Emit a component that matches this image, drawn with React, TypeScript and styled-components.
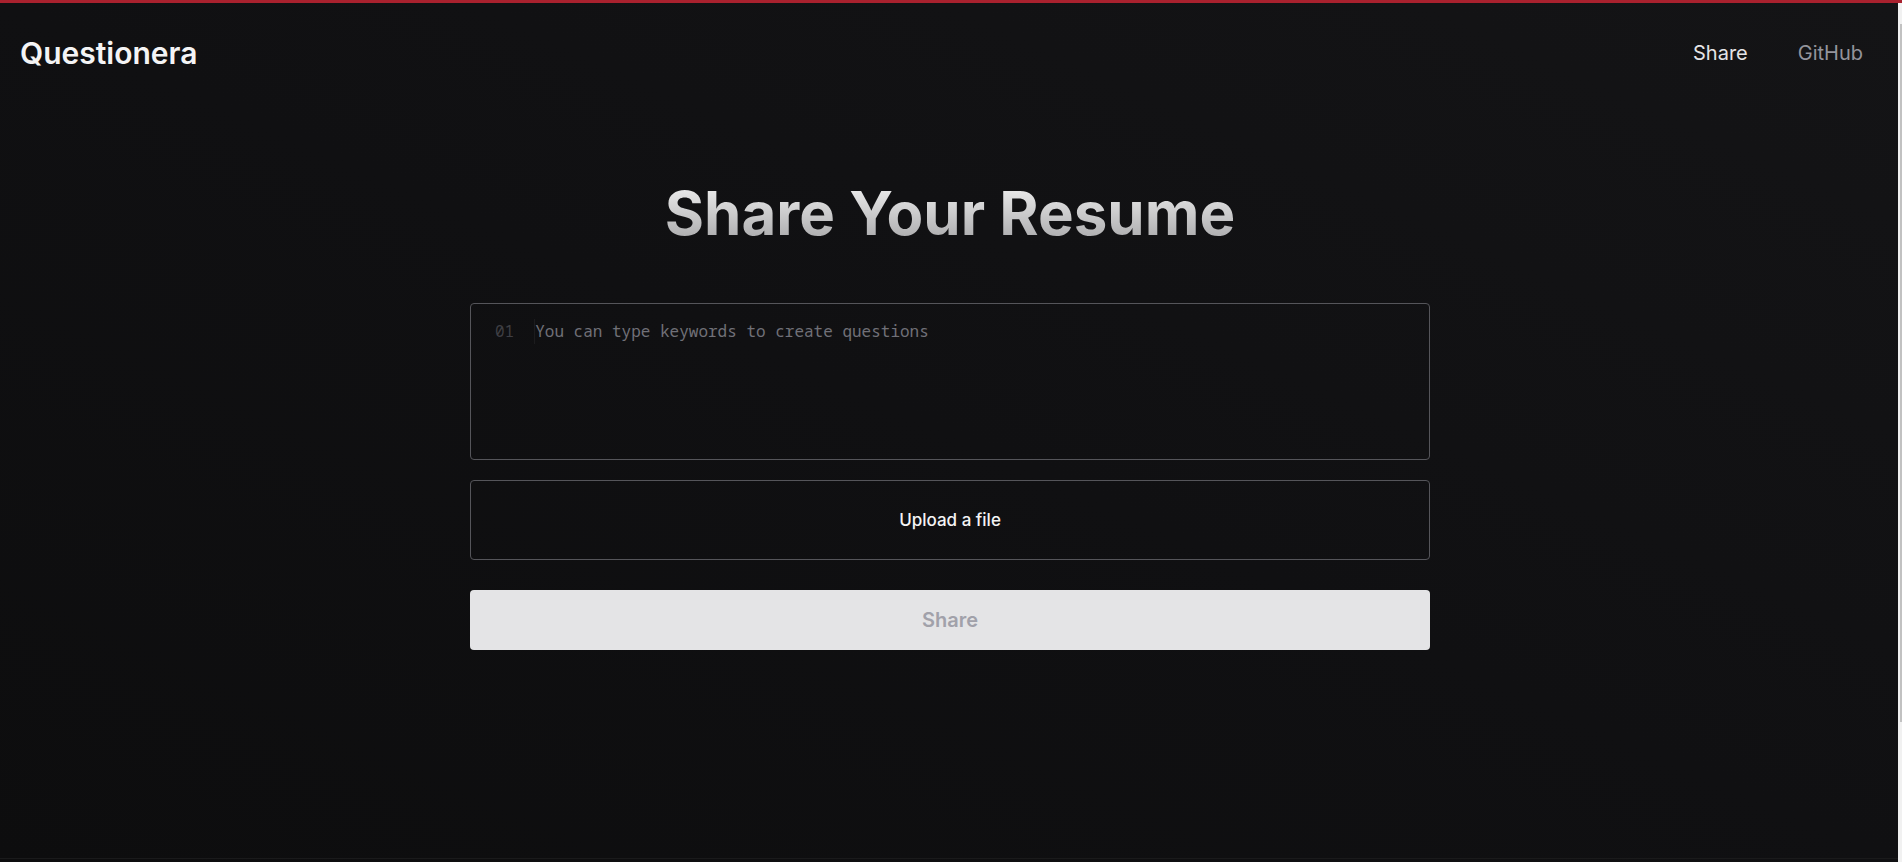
import React from "react";
import styled, { createGlobalStyle } from "styled-components";

const GlobalStyle = createGlobalStyle`
  *, *::before, *::after { box-sizing: border-box; }
  body {
    margin: 0;
    background: #0f0f10;
    color: #f4f4f5;
    font-family: Inter, "Liberation Sans", sans-serif;
  }
`;

const Shell = styled.div`
  display: flex;
  min-height: 100vh;
  flex-direction: column;
  border-top: 3px solid #a9212e;
`;

const Viewport = styled.div`
  display: flex;
  flex: 1;
`;

const Page = styled.div`
  display: flex;
  flex: 1;
  flex-direction: column;
  min-width: 0;
  background: linear-gradient(to top right, #0d0d0e, #101012 50%, #141416);
`;

const Header = styled.header`
  display: flex;
  align-items: center;
  justify-content: space-between;
  padding: 32px 37px 32px 20px;
`;

const Logo = styled.a`
  color: #f4f4f5;
  font-size: 30px;
  font-weight: 600;
  line-height: 36px;
  text-decoration: none;
`;

const Nav = styled.nav`
  display: flex;
  gap: 50px;
`;

const NavLink = styled.a<{ $active?: boolean }>`
  color: ${(p) => (p.$active ? "#e4e4e7" : "#94949c")};
  font-size: 20px;
  line-height: 28px;
  text-decoration: none;
`;

const Main = styled.main`
  display: flex;
  flex: 1;
  flex-direction: column;
  align-items: center;
  padding: 80px 20px;
`;

const Title = styled.h1`
  margin: 0 0 60px;
  background: linear-gradient(to bottom, #f0f0f0, #a8a8aa);
  background-clip: text;
  -webkit-background-clip: text;
  color: transparent;
  font-size: 60px;
  font-weight: 700;
  line-height: 60px;
  text-align: center;
`;

const Form = styled.form`
  display: flex;
  flex-direction: column;
  width: 100%;
  max-width: 960px;
`;

const Editor = styled.div`
  display: flex;
  align-items: flex-start;
  height: 157px;
  padding: 15px 24px;
  border: 1px solid #55555a;
  border-radius: 4px;
  font-family: "Noto Sans Mono", "DejaVu Sans Mono", monospace;
  font-size: 16px;
  line-height: 25px;
`;

const LineNumber = styled.span`
  padding-right: 20px;
  border-right: 1px solid #1c1c1e;
  color: #3f3f44;
`;

const KeywordInput = styled.textarea`
  flex: 1;
  align-self: stretch;
  padding: 0;
  border: 0;
  outline: 0;
  background: transparent;
  color: #e4e4e7;
  font: inherit;
  resize: none;

  &::placeholder {
    color: #707078;
    opacity: 1;
  }
`;

const Button = styled.button`
  border-radius: 4px;
  font-family: inherit;
`;

const UploadButton = styled(Button)`
  height: 80px;
  margin: 20px 0 30px;
  border: 1px solid #55555a;
  background: transparent;
  color: #f4f4f5;
  font-size: 17px;
  font-weight: 500;
`;

const SubmitButton = styled(Button)`
  height: 60px;
  border: 0;
  background: #e4e4e6;
  color: #a1a1aa;
  font-size: 20px;
  font-weight: 600;
`;

const Footer = styled.footer`
  height: 4px;
  border-top: 1px solid #1a1a1b;
`;

const ScrollTrack = styled.div`
  width: 4px;
  margin-left: -2px;
  padding: 21px 0 0 2px;
  background: #f1f1f1;
`;

const ScrollThumb = styled.div`
  height: 83.3%;
  background: #c1c1c1;
`;

export default function App() {
  return (
    <>
      <GlobalStyle />
      <Shell>
        <Viewport>
          <Page>
            <Header>
              <Logo href="#">Questionera</Logo>
              <Nav>
                <NavLink href="#share" $active>Share</NavLink>
                <NavLink href="#github">GitHub</NavLink>
              </Nav>
            </Header>
            <Main>
              <Title>Share Your Resume</Title>
              <Form onSubmit={(e) => e.preventDefault()}>
                <Editor>
                  <LineNumber aria-hidden="true">01</LineNumber>
                  <KeywordInput
                    aria-label="Keywords"
                    placeholder="You can type keywords to create questions"
                  />
                </Editor>
                <UploadButton type="button">Upload a file</UploadButton>
                <SubmitButton type="submit" disabled>Share</SubmitButton>
              </Form>
            </Main>
            <Footer />
          </Page>
          <ScrollTrack aria-hidden="true">
            <ScrollThumb />
          </ScrollTrack>
        </Viewport>
      </Shell>
    </>
  );
}
